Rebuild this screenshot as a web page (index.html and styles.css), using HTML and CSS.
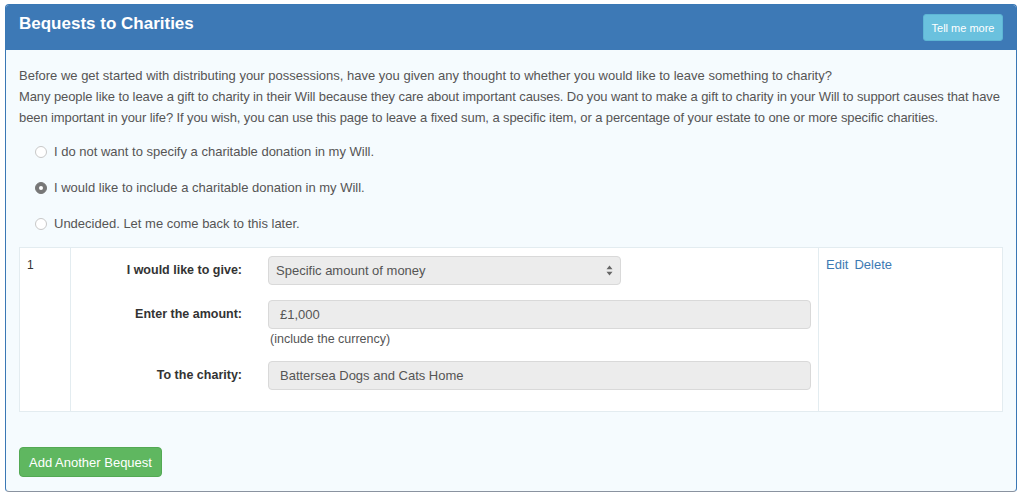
FILE: index.html
```html
<!DOCTYPE html>
<html>
<head>
<meta charset="utf-8">
<link rel="stylesheet" href="styles.css">
</head>
<body>
<div class="panel">
  <div class="panel-heading">
    <h3 class="panel-title">Bequests to Charities</h3>
    <button class="btn-info">Tell me more</button>
  </div>
  <div class="panel-body">
    <p>Before we get started with distributing your possessions, have you given any thought to whether you would like to leave something to charity?</p>
    <p class="tight">Many people like to leave a gift to charity in their Will because they care about important causes. Do you want to make a gift to charity in your Will to support causes that have been important in your life? If you wish, you can use this page to leave a fixed sum, a specific item, or a percentage of your estate to one or more specific charities.</p>
    <div class="radios">
      <label class="radio"><span class="dot"></span>I do not want to specify a charitable donation in my Will.</label>
      <label class="radio"><span class="dot checked"></span>I would like to include a charitable donation in my Will.</label>
      <label class="radio"><span class="dot"></span>Undecided. Let me come back to this later.</label>
    </div>
    <div class="bequest-table">
      <div class="cell num">1</div>
      <div class="cell form">
        <div class="row">
          <div class="lbl">I would like to give:</div>
          <div class="field"><div class="select"><span>Specific amount of money</span><svg width="7" height="11" viewBox="0 0 7 11"><path d="M3.5 0.5 L6.5 4.2 H0.5Z M3.5 10.5 L6.5 6.8 H0.5Z" fill="#666"/></svg></div></div>
        </div>
        <div class="row">
          <div class="lbl">Enter the amount:</div>
          <div class="field"><div class="input">£1,000</div><div class="help">(include the currency)</div></div>
        </div>
        <div class="row">
          <div class="lbl">To the charity:</div>
          <div class="field"><div class="input">Battersea Dogs and Cats Home</div></div>
        </div>
      </div>
      <div class="cell actions"><a>Edit</a><a>Delete</a></div>
    </div>
    <button class="btn-success">Add Another Bequest</button>
  </div>
</div>
</body>
</html>
```
FILE: styles.css
```css
html, body { background: #fff; }
body {
  margin: 4px 7px 0 5px;
  font-family: "Liberation Sans", Arial, sans-serif;
  font-size: 13px;
  color: #555;
}
.panel {
  border: 1px solid #3a78b5;
  border-radius: 4px;
  background: #f5fbfe;
  height: 488px;
  box-sizing: border-box;
  overflow: hidden;
  border-bottom-color: #8a93a0;
}
.panel-heading {
  background: #3d79b6;
  height: 45px;
  box-sizing: border-box;
  padding: 9px 13px 0 13px;
  display: flex;
  justify-content: space-between;
  align-items: flex-start;
}
.panel-title {
  margin: 0;
  color: #fff;
  font-size: 17px;
  font-weight: bold;
  line-height: 20px;
}
.btn-info {
  background: #6ac1de;
  border: 1px solid #5db5d4;
  color: #fff;
  font-family: inherit;
  font-size: 11px;
  border-radius: 3px;
  height: 27px;
  width: 80px;
  padding: 0;
  margin-top: 0;
}
.panel-body {
  padding: 15px 13px 0 13px;
}
.panel-body p {
  margin: 0;
  line-height: 21px;
  margin-right: -8px;
}
.panel-body p.tight { letter-spacing: -0.1px; }
.radios { padding-left: 16px; margin-top: 13px; }
.radio {
  display: flex;
  align-items: center;
  height: 21px;
  margin-bottom: 15px;
}
.radio:last-child { margin-bottom: 0; }
.dot {
  width: 12px;
  height: 12px;
  border-radius: 50%;
  border: 1px solid #c8c8c8;
  background: #fff;
  margin-right: 7px;
  box-sizing: border-box;
  display: inline-flex;
  align-items: center;
  justify-content: center;
}
.dot.checked { background: #777; border-color: #777; }
.dot.checked::after {
  content: "";
  width: 4px;
  height: 4px;
  border-radius: 50%;
  background: #fff;
}
.bequest-table {
  margin-top: 13px;
  display: grid;
  grid-template-columns: 51px 748px 1fr;
  background: #fff;
  border: 1px solid #e3ecf0;
  height: 165px;
  box-sizing: border-box;
}
.cell { padding: 8px 7px; }
.num { border-right: 1px solid #e3ecf0; color: #333; font-size: 12px; padding-top: 10px; }
.form { border-right: 1px solid #e3ecf0; padding: 8px 7px 0 0; }
.row { display: flex; margin-bottom: 15px; }
.row:nth-child(2) { margin-bottom: 13px; }
.lbl {
  width: 171px;
  text-align: right;
  font-weight: bold;
  font-size: 12.5px;
  color: #333;
  line-height: 29px;
  padding-right: 26px;
  flex: none;
}
.field { flex: 1; }
.select, .input {
  height: 29px;
  box-sizing: border-box;
  background: #ececec;
  border: 1px solid #d9d9d9;
  border-radius: 4px;
  color: #555;
  display: flex;
  align-items: center;
  padding: 0 8px;
}
.select { width: 353px; justify-content: space-between; padding: 0 7px; }
.input { padding-left: 11px; }
.help { margin-top: 1px; padding-left: 2px; line-height: 18px; color: #555; font-size: 12.5px; }
.actions { padding: 9px 7px; display: flex; gap: 6px; align-items: flex-start; }
.actions a { color: #3d7ab3; font-size: 13px; }
.btn-success {
  margin-top: 35px;
  background: #5fb760;
  border: 1px solid #53a954;
  color: #fff;
  font-family: inherit;
  font-size: 13px;
  border-radius: 4px;
  height: 30px;
  width: 143px;
  padding: 0;
}
```
